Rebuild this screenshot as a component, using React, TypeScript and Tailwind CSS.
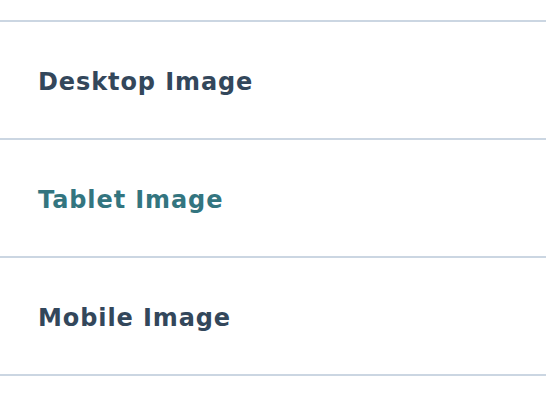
export default function App() {
  const items = [
    { label: "Desktop Image", active: false },
    { label: "Tablet Image", active: true },
    { label: "Mobile Image", active: false },
  ];
  return (
    <div className="w-[546px] h-[410px] bg-white pt-[20px]" style={{ fontFamily: "'DejaVu Sans', 'Noto Sans', sans-serif" }}>
      <div className="border-b-2 border-[#cbd6e2]">
        {items.map((it) => (
          <div key={it.label} className="border-t-2 border-[#cbd6e2] h-[118px] flex items-center pl-[38px] pt-[3px]">
            <span className={`text-[24px] font-bold leading-none tracking-[0.9px] ${it.active ? "text-[#33757f]" : "text-[#33475b]"}`}>
              {it.label}
            </span>
          </div>
        ))}
      </div>
    </div>
  );
}
